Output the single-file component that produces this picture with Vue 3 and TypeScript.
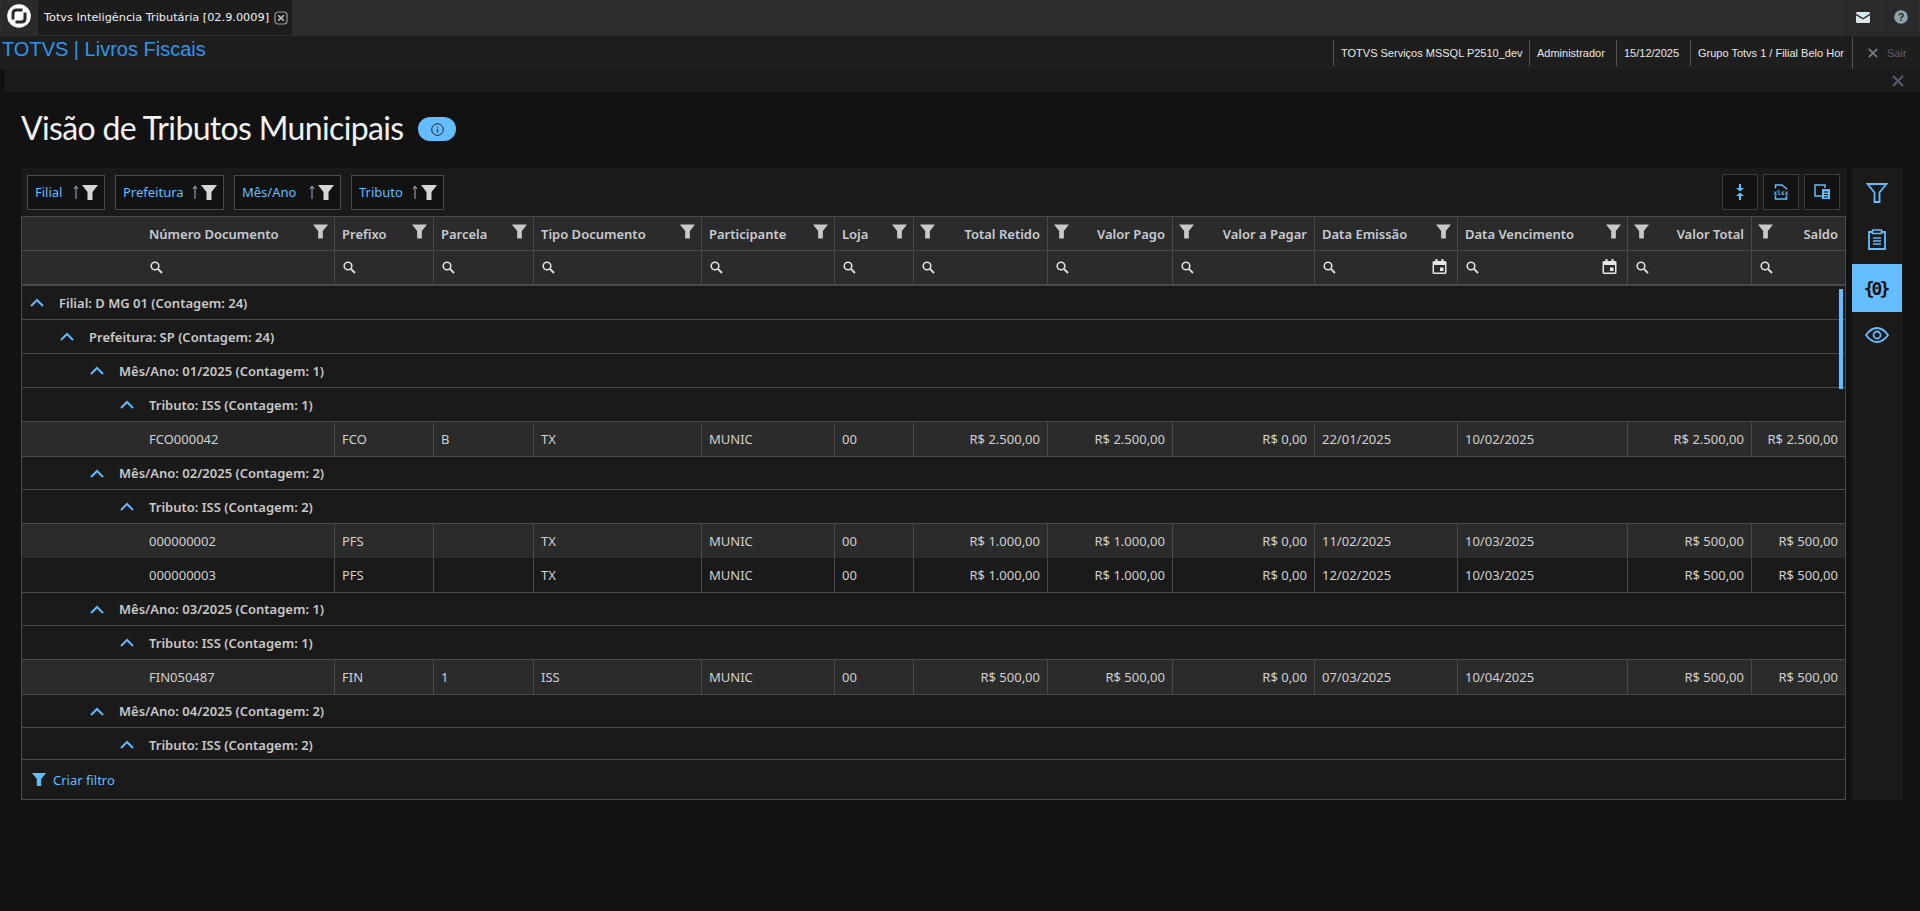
<script setup lang="ts">
interface Col { label: string; right?: boolean; filterLeft?: boolean; date?: boolean }
const cols: Col[] = [
  { label: 'Número Documento' }, { label: 'Prefixo' }, { label: 'Parcela' }, { label: 'Tipo Documento' },
  { label: 'Participante' }, { label: 'Loja' },
  { label: 'Total Retido', right: true, filterLeft: true }, { label: 'Valor Pago', right: true, filterLeft: true },
  { label: 'Valor a Pagar', right: true, filterLeft: true }, { label: 'Data Emissão', date: true },
  { label: 'Data Vencimento', date: true }, { label: 'Valor Total', right: true, filterLeft: true },
  { label: 'Saldo', right: true, filterLeft: true }
]
const chips = [
  { label: 'Filial', width: 78 },
  { label: 'Prefeitura', width: 109 },
  { label: 'Mês/Ano', width: 107 },
  { label: 'Tributo', width: 93 }
]
type Row = { group: string; level: number } | { cells: string[]; alt?: boolean }
const rows: Row[] = [
  { group: 'Filial: D MG 01 (Contagem: 24)', level: 0 },
  { group: 'Prefeitura: SP (Contagem: 24)', level: 1 },
  { group: 'Mês/Ano: 01/2025 (Contagem: 1)', level: 2 },
  { group: 'Tributo: ISS (Contagem: 1)', level: 3 },
  { cells: ['FCO000042', 'FCO', 'B', 'TX', 'MUNIC', '00', 'R$ 2.500,00', 'R$ 2.500,00', 'R$ 0,00', '22/01/2025', '10/02/2025', 'R$ 2.500,00', 'R$ 2.500,00'], alt: true },
  { group: 'Mês/Ano: 02/2025 (Contagem: 2)', level: 2 },
  { group: 'Tributo: ISS (Contagem: 2)', level: 3 },
  { cells: ['000000002', 'PFS', '', 'TX', 'MUNIC', '00', 'R$ 1.000,00', 'R$ 1.000,00', 'R$ 0,00', '11/02/2025', '10/03/2025', 'R$ 500,00', 'R$ 500,00'], alt: true },
  { cells: ['000000003', 'PFS', '', 'TX', 'MUNIC', '00', 'R$ 1.000,00', 'R$ 1.000,00', 'R$ 0,00', '12/02/2025', '10/03/2025', 'R$ 500,00', 'R$ 500,00'] },
  { group: 'Mês/Ano: 03/2025 (Contagem: 1)', level: 2 },
  { group: 'Tributo: ISS (Contagem: 1)', level: 3 },
  { cells: ['FIN050487', 'FIN', '1', 'ISS', 'MUNIC', '00', 'R$ 500,00', 'R$ 500,00', 'R$ 0,00', '07/03/2025', '10/04/2025', 'R$ 500,00', 'R$ 500,00'], alt: true },
  { group: 'Mês/Ano: 04/2025 (Contagem: 2)', level: 2 },
  { group: 'Tributo: ISS (Contagem: 2)', level: 3 }
]
const isRight = (i: number) => !!cols[i].right
const sessionItems = [
  { text: 'TOTVS Serviços MSSQL P2510_dev', width: 196 },
  { text: 'Administrador', width: 87 },
  { text: '15/12/2025', width: 74 },
  { text: 'Grupo Totvs 1 / Filial Belo Hor', width: 162 }
]
</script>

<template>
  <div class="page">
    <header class="tabbar">
      <div class="logo-tab">
        <svg width="24" height="24" viewBox="0 0 24 24">
          <circle cx="12" cy="12" r="11.800" fill="#fff" />
          <path d="M6 15.500V9.500Q6 6 9.500 6H15.500" fill="none" stroke="#2a2a2a" stroke-width="3" />
          <path d="M18 8.500V14.500Q18 18 14.500 18H8.500" fill="none" stroke="#2a2a2a" stroke-width="3" />
        </svg>
      </div>
      <div class="app-tab">
        <span class="tab-title">Totvs Inteligência Tributária [02.9.0009]</span>
        <svg width="14" height="14" viewBox="0 0 14 14" class="tab-close">
          <rect x="1" y="1" width="12" height="12" rx="3" fill="none" stroke="#9a9a9a" stroke-width="1.2" />
          <path d="M4.200 4.200l5.600 5.600M9.800 4.200l-5.600 5.600" stroke="#c4c4c4" stroke-width="1.600" />
        </svg>
      </div>
      <div class="spacer"></div>
      <button class="top-btn">
        <svg width="14" height="11" viewBox="0 0 14 11"><path d="M0 1.200Q0 0 1.200 0h11.600Q14 0 14 1.200v.4L7 6 0 1.600zM0 3.200l7 4.300 7-4.300v6.600q0 1.200-1.200 1.200H1.200Q0 11 0 9.800z" fill="#dbe6ec" /></svg>
      </button>
      <button class="top-btn">
        <svg width="14" height="14" viewBox="0 0 14 14"><circle cx="7" cy="7" r="6.800" fill="#8ea4af" /><text x="7" y="11" text-anchor="middle" class="qmark">?</text></svg>
      </button>
    </header>

    <div class="infobar">
      <div class="brand">TOTVS | Livros Fiscais</div>
      <div class="session">
        <span v-for="s in sessionItems" :key="s.text" class="session-item" :style="{ width: s.width + 'px' }">{{ s.text }}</span>
        <span class="session-exit">
          <svg width="10" height="10" viewBox="0 0 10 10"><path d="M.8.8l8.400 8.400M9.200.8L.8 9.200" stroke="#747c84" stroke-width="1.800" /></svg>
          Sair
        </span>
      </div>
    </div>

    <div class="closebar">
      <svg width="12" height="12" viewBox="0 0 12 12"><path d="M1 1l10 10M11 1L1 11" stroke="#535e6e" stroke-width="2" /></svg>
    </div>

    <main class="content">
      <div class="title-row">
        <h1>Visão de Tributos Municipais</h1>
        <span class="info-pill">
          <svg width="13" height="13" viewBox="0 0 13 13"><circle cx="6.500" cy="6.500" r="5.800" fill="none" stroke="#12283a" stroke-width="1" /><path d="M6.500 5.800v3.600M6.500 3.400v1.100" stroke="#12283a" stroke-width="1.200" /></svg>
        </span>
      </div>

      <div class="workspace">
        <section class="panel">
          <div class="toolbar">
            <div v-for="c in chips" :key="c.label" class="chip" :style="{ width: c.width + 'px' }">
              <span class="chip-label">{{ c.label }}</span>
              <svg width="6" height="14" viewBox="0 0 6 14" class="chip-arrow"><path d="M3 14V2M1 4l2-3 2 3" stroke="#9fb3c0" stroke-width="1" fill="none" /></svg>
              <svg width="16" height="15" viewBox="0 0 16 15"><path d="M0 0h16l-5.500 7v8h-5V7z" fill="#d6d6d6" /></svg>
            </div>
            <div class="spacer"></div>
            <button class="tool-btn">
              <svg width="8" height="16" viewBox="0 0 8 16"><path d="M3 0h2v4h3L4 7.500 0 4h3zM4 8.500L8 12H5v4H3v-4H0z" fill="#63bdff" /></svg>
            </button>
            <button class="tool-btn">
              <svg width="16" height="16" viewBox="0 0 16 16">
                <path d="M2.500 4.500V1h6.500l4.500 3.500v1M13.500 11.500V15H2.500v-3.500" fill="none" stroke="#63bdff" stroke-width="1.500" />
                <text x="8" y="10.500" text-anchor="middle" class="xlsx">xlsx</text>
              </svg>
            </button>
            <button class="tool-btn">
              <svg width="16" height="16" viewBox="0 0 16 16">
                <path d="M8 12H1V1h10v3" fill="none" stroke="#63bdff" stroke-width="1.500" />
                <path d="M8 5h8v10H8z" fill="#63bdff" />
                <path d="M10 8h4M10 10.500h4M10 13h4" stroke="#121212" stroke-width="1" />
              </svg>
            </button>
          </div>

          <div class="grid">
            <div class="row head">
              <div v-for="c in cols" :key="c.label" class="cell head-cell" :class="{ 'first-col': c.label === 'Número Documento' }">
                <svg v-if="c.filterLeft" class="funnel left" width="15" height="15" viewBox="0 0 16 15"><path d="M0 0h16l-5.500 7v8h-5V7z" fill="#c8c8c8" /></svg>
                <span class="head-label">{{ c.label }}</span>
                <svg v-if="!c.filterLeft" class="funnel right" width="15" height="15" viewBox="0 0 16 15"><path d="M0 0h16l-5.500 7v8h-5V7z" fill="#c8c8c8" /></svg>
              </div>
            </div>
            <div class="row search">
              <div v-for="c in cols" :key="c.label" class="cell search-cell" :class="{ 'first-col': c.label === 'Número Documento' }">
                <svg width="13" height="13" viewBox="0 0 13 13"><circle cx="5" cy="5" r="3.800" fill="none" stroke="#e0e0e0" stroke-width="1.600" /><path d="M8 8l4 4" stroke="#e0e0e0" stroke-width="1.800" /></svg>
                <svg v-if="c.date" class="cal" width="15" height="15" viewBox="0 0 14 15">
                  <path d="M3 0h2v2h4V0h2v2h1.500Q14 2 14 3.500v10q0 1.500-1.500 1.500h-11Q0 15 0 13.500v-10Q0 2 1.500 2H3zM1.500 6v7.500h11V6z" fill="#e6e6e6" fill-rule="evenodd" />
                  <rect x="7.500" y="8.500" width="3.500" height="3.500" fill="#e6e6e6" />
                </svg>
              </div>
            </div>

            <div class="body">
              <div class="scroll-thumb"></div>
              <template v-for="(r, idx) in rows" :key="idx">
                <div v-if="'group' in r" class="group-row" :class="'lvl' + r.level">
                  <svg width="14" height="9" viewBox="0 0 14 9"><path d="M1 8l6-6 6 6" fill="none" stroke="#5fb9fb" stroke-width="2" /></svg>
                  <span>{{ r.group }}</span>
                </div>
                <div v-else class="row data" :class="{ alt: r.alt }">
                  <div v-for="(v, i) in r.cells" :key="i" class="cell data-cell" :class="{ 'first-col': i === 0, right: isRight(i) }">{{ v }}</div>
                </div>
              </template>
            </div>

            <div class="footer">
              <svg width="14" height="15" viewBox="0 0 16 15"><path d="M0 0h16l-5.500 7v8h-5V7z" fill="#63bdff" /></svg>
              <span>Criar filtro</span>
            </div>
          </div>
        </section>

        <aside class="rail">
          <button class="rail-btn">
            <svg class="rail-filter" width="22" height="20" viewBox="0 0 22 20"><path d="M1.500 1h19l-7 8.500V19h-5V9.500z" fill="none" stroke="#63bdff" stroke-width="1.800" /></svg>
          </button>
          <button class="rail-btn">
            <svg class="rail-raise" width="18" height="21" viewBox="0 0 18 21">
              <path d="M4 3H1v17h16V3h-3" fill="none" stroke="#63bdff" stroke-width="1.800" />
              <rect x="4.500" y="1" width="9" height="3.500" fill="none" stroke="#63bdff" stroke-width="1.500" />
              <path d="M5 9h8M5 12h8M5 15h8" stroke="#63bdff" stroke-width="1.400" />
            </svg>
          </button>
          <button class="rail-btn active"><span class="code">{0}</span></button>
          <button class="rail-btn">
            <svg class="rail-raise" width="24" height="16" viewBox="0 0 24 16">
              <path d="M1 8Q6 1 12 1t11 7q-5 7-11 7T1 8z" fill="none" stroke="#63bdff" stroke-width="1.800" />
              <circle cx="12" cy="8" r="3.500" fill="none" stroke="#63bdff" stroke-width="1.800" />
            </svg>
          </button>
        </aside>
      </div>
    </main>
  </div>
</template>

<style>
html, body { margin: 0; background: #121212; }
</style>

<style scoped>
.page { width: 1920px; height: 911px; overflow: hidden; background: #121212; display: flex; flex-direction: column; color: #d4d4d4; font-family: "Noto Sans", sans-serif; }
button { border: 0; padding: 0; margin: 0; cursor: pointer; }
.spacer { flex: 1; }

.tabbar { height: 36px; flex: none; background: #2d2d2d; display: flex; align-items: flex-start; }
.logo-tab { width: 36px; height: 34px; margin-left: 1px; background: #2a2a2a; border-radius: 0 0 3px 3px; display: flex; align-items: center; justify-content: center; }
.logo-tab svg { margin-top: -2px; }
.app-tab { width: 254px; height: 35px; margin-left: 1px; background: #1c1c1c; border-radius: 3px 3px 0 0; display: flex; align-items: center; padding-left: 6px; box-sizing: border-box; font: 11.300px "DejaVu Sans", sans-serif; color: #f0f0f0; }
.tab-title { white-space: nowrap; }
.tab-close { margin-left: 5px; flex: none; }
.top-btn { width: 37px; height: 34px; margin-right: 1px; background: #2a2a2a; border-radius: 0 0 3px 3px; display: flex; align-items: center; justify-content: center; }
.qmark { font: bold 11px "Liberation Sans", sans-serif; fill: #2a2a2a; }

.infobar { height: 33px; flex: none; background: #1e1e1e; display: flex; justify-content: space-between; align-items: center; }
.brand { font: 20px "Liberation Sans", sans-serif; color: #2d96ea; padding-left: 2px; position: relative; top: -3px; }
.session { display: flex; align-items: center; height: 100%; font: 11px "Liberation Sans", sans-serif; color: #e8e8e8; }
.session-item { display: flex; align-items: center; height: 26px; padding-left: 7px; box-sizing: border-box; border-left: 1px solid #555; white-space: nowrap; }
.session-exit { display: flex; align-items: center; gap: 9px; height: 32px; width: 68px; padding-left: 15px; box-sizing: border-box; border-left: 1px solid #555; color: #5f5f5f; }

.closebar { height: 23px; flex: none; margin-left: 5px; background: #1b1b1b; display: flex; align-items: center; justify-content: flex-end; padding-right: 16px; }

.content { flex: 1; padding: 0 18px 0 21px; }
.title-row { height: 76px; display: flex; align-items: center; gap: 15px; }
h1 { margin: 0; font: 400 32px Lato, sans-serif; letter-spacing: -0.65px; color: #f2f2f2; position: relative; top: -3px; }
.info-pill { width: 38px; height: 24px; border-radius: 12px; background: #63bdff; display: flex; align-items: center; justify-content: center; position: relative; top: -1px; }

.workspace { display: flex; gap: 6px; align-items: flex-start; }
.panel { width: 1825px; background: #1a1a1a; }
.toolbar { height: 48px; display: flex; align-items: center; padding: 0 6px; gap: 10px; box-sizing: border-box; }
.chip { height: 35px; box-sizing: border-box; border: 1px solid #4a4a4a; background: #121212; display: flex; align-items: center; padding: 0 6px 0 7px; font-size: 13px; color: #63bdff; }
.chip-label { flex: 1; white-space: nowrap; }
.chip-arrow { margin-right: 3px; }
.tool-btn { width: 36px; height: 36px; box-sizing: border-box; border: 1px solid #3c3c3c; background: #121212; display: flex; align-items: center; justify-content: center; margin-left: -5px; }
.xlsx { font: bold 6.200px "DejaVu Sans Mono", monospace; fill: #63bdff; }

.grid { border: 1px solid #4a4a4a; }
.row { display: grid; grid-template-columns: 313px 99px 100px 168px 133px 79px 134px 125px 142px 143px 170px 124px 93px; }
.cell { box-sizing: border-box; border-right: 1px solid #4a4a4a; display: flex; align-items: center; padding: 0 7px; min-width: 0; }
.cell:last-child { border-right: 0; }
.head { background: #2b2b2b; height: 34px; border-bottom: 1px solid #4a4a4a; box-sizing: border-box; font-size: 13px; font-weight: 600; color: #c8ccd0; }
.head-cell { justify-content: space-between; }
.head-cell.first-col { padding-left: 127px; }
.head-label { white-space: nowrap; }
.funnel { flex: none; margin-top: -4px; }
.funnel.left { margin-left: -1px; }
.funnel.right { margin-right: -1px; }
.search { background: #2b2b2b; height: 35px; border-bottom: 2px solid #4a4a4a; box-sizing: border-box; }
.search-cell { justify-content: space-between; padding: 0 10px 0 8px; }
.search-cell.first-col { padding-left: 128px; }
.cal { margin-top: -3px; }

.body { position: relative; height: 474px; overflow: hidden; background: #1a1a1a; border-bottom: 1px solid #4a4a4a; box-sizing: border-box; font-size: 13px; }
.scroll-thumb { position: absolute; right: 2px; top: 3px; width: 4px; height: 100px; background: #63bdff; }
.group-row { height: 34px; box-sizing: border-box; border-bottom: 1px solid #4a4a4a; display: flex; align-items: center; gap: 15px; font-weight: 600; color: #c8c8c8; padding-left: 8px; }
.group-row.lvl1 { padding-left: 38px; }
.group-row.lvl2 { padding-left: 68px; }
.group-row.lvl3 { padding-left: 98px; }
.data { height: 34px; box-sizing: border-box; color: #d0d0d0; }
.data.alt { background: #2b2b2b; }
.data + .group-row { border-top: 1px solid #4a4a4a; }
.data-cell { white-space: nowrap; }
.data-cell.first-col { padding-left: 127px; }
.data-cell.right { justify-content: flex-end; }

.footer { height: 39px; display: flex; align-items: center; gap: 7px; padding-left: 10px; font-size: 13px; color: #63bdff; }

.rail { width: 50px; height: 632px; background: #1a1a1a; display: flex; flex-direction: column; }
.rail-btn { width: 50px; height: 48px; background: transparent; display: flex; align-items: center; justify-content: center; }
.rail-btn.active { background: #63bdff; color: #111; }
.rail-filter { margin-top: 1px; }
.rail-raise { margin-top: -2px; }
.code { font: bold 18px "DejaVu Sans Mono", monospace; letter-spacing: -3px; margin-left: -3px; }
</style>
